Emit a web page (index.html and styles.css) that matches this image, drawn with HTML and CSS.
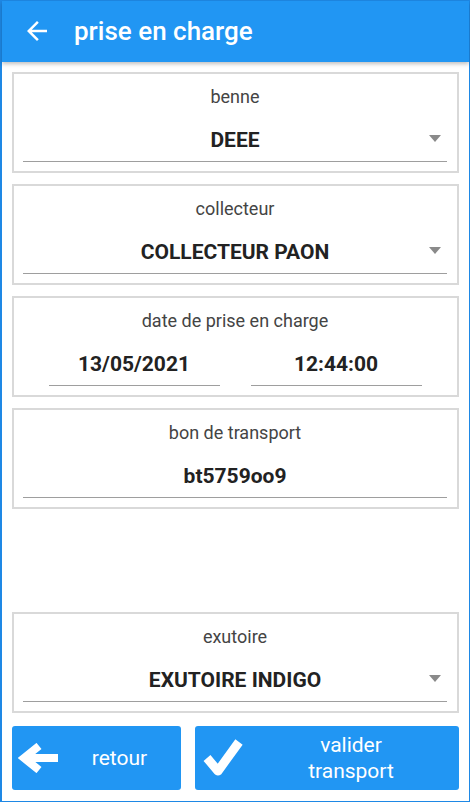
FILE: index.html
```html
<!DOCTYPE html>
<html lang="fr">
<head>
<meta charset="utf-8">
<title>prise en charge</title>
<link rel="stylesheet" href="styles.css">
</head>
<body>
<div class="screen">
  <header class="appbar">
    <svg class="appbar-back" viewBox="0 0 24 24" width="30" height="30"><path d="M20 11H7.83l5.59-5.59L12 4l-8 8 8 8 1.41-1.41L7.83 13H20v-2z" fill="#fff"/></svg>
    <h1 class="appbar-title">prise en charge</h1>
  </header>
  <main class="content">
    <section class="card">
      <div class="card-label">benne</div>
      <div class="field select"><span>DEEE</span><i class="caret"></i></div>
    </section>
    <section class="card">
      <div class="card-label">collecteur</div>
      <div class="field select"><span>COLLECTEUR PAON</span><i class="caret"></i></div>
    </section>
    <section class="card">
      <div class="card-label">date de prise en charge</div>
      <div class="field-row">
        <div class="field half"><span>13/05/2021</span></div>
        <div class="field half"><span>12:44:00</span></div>
      </div>
    </section>
    <section class="card">
      <div class="card-label">bon de transport</div>
      <div class="field wide"><span>bt5759oo9</span></div>
    </section>
    <div class="spacer"></div>
    <section class="card">
      <div class="card-label">exutoire</div>
      <div class="field select"><span>EXUTOIRE INDIGO</span><i class="caret"></i></div>
    </section>
    <div class="actions">
      <button class="btn btn-back">
        <svg class="btn-icon" viewBox="0 0 40 30" width="40" height="30"><path d="M21 3 L6 15 L21 27 M7 15 H40" fill="none" stroke="#fff" stroke-width="8" stroke-linejoin="miter"/></svg>
        <span class="btn-text">retour</span>
      </button>
      <button class="btn btn-ok">
        <svg class="btn-icon" viewBox="0 0 40 40" width="40" height="40"><path d="M4 20 L15 33 L36 4" fill="none" stroke="#fff" stroke-width="9" stroke-linejoin="round"/></svg>
        <span class="btn-text">valider<br>transport</span>
      </button>
    </div>
  </main>
</div>
</body>
</html>
```
FILE: styles.css
```css
* { box-sizing: border-box; }
html, body { margin: 0; padding: 0; }
body {
  font-family: Roboto, "Noto Sans", "Liberation Sans", sans-serif;
  background: #fff;
}
.screen {
  width: 470px;
  height: 802px;
  border: 1px solid #1e88e5;
  border-left-width: 2px;
  display: flex;
  flex-direction: column;
  background: #fff;
}
.appbar {
  height: 61px;
  flex: none;
  background: #2196f3;
  display: flex;
  align-items: center;
  padding-left: 20px;
  box-shadow: 0 2px 4px rgba(0,0,0,0.25);
  position: relative;
  z-index: 1;
}
.appbar-back { flex: none; margin-top: -1px; }
.appbar-title {
  margin: 0 0 0 22px;
  color: #fff;
  font-size: 26px;
  font-weight: 500;
  line-height: 32px;
  margin-top: -1px;
}
.content {
  flex: 1;
  display: flex;
  flex-direction: column;
  padding: 10px 10px 11px 10px;
}
.card {
  border: 2px solid #d9d9d9;
  padding: 12px 10px 9px 9px;
  margin-bottom: 11px;
  background: #fff;
}
.card-label {
  text-align: center;
  color: #444;
  font-size: 18px;
  line-height: 22px;
}
.field {
  margin-top: 14px;
  height: 40px;
  line-height: 36px;
  border-bottom: 1px solid #9e9e9e;
  text-align: center;
  font-size: 21px;
  font-weight: 700;
  color: #222;
  position: relative;
}
.field-row {
  display: flex;
  justify-content: center;
  gap: 31px;
}
.field.half { width: 171px; }
.caret {
  position: absolute;
  right: 6px;
  top: 13px;
  width: 0;
  height: 0;
  border-left: 6px solid transparent;
  border-right: 6px solid transparent;
  border-top: 7px solid #8a8a8a;
}
.spacer { flex: 1; }
.actions {
  display: flex;
  gap: 14px;
  margin-top: 2px;
}
.btn {
  height: 64px;
  border: none;
  border-radius: 3px;
  background: #2196f3;
  color: #fff;
  font-family: inherit;
  font-size: 21px;
  line-height: 26px;
  display: flex;
  align-items: center;
  padding: 0 0 0 6px;
  cursor: pointer;
}
.btn-back { width: 169px; flex: none; }
.btn-ok { flex: 1; padding-left: 8px; }
.btn-icon { flex: none; }
.btn-text { flex: 1; text-align: center; }
.btn-back .btn-text { padding-left: 0; }
.btn-ok .btn-text { padding-left: 0; }
```
